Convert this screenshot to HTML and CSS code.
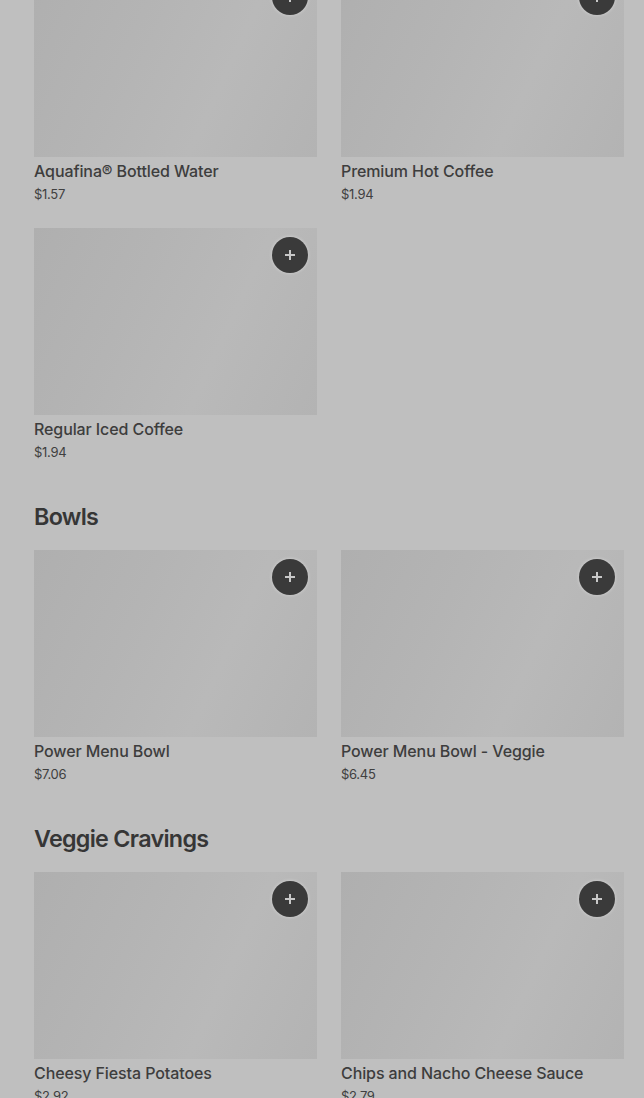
FILE: index.html
```html
<!DOCTYPE html>
<html>
<head>
<meta charset="utf-8">
<link rel="stylesheet" href="styles.css">
</head>
<body>
<main class="menu">
  <section class="section first">
    <div class="grid">
      <div class="card">
        <div class="thumb"><button class="add"><svg viewBox="0 0 12 12" width="12" height="12"><path d="M6 1v10M1 6h10" stroke="currentColor" stroke-width="2"/></svg></button></div>
        <div class="name">Aquafina® Bottled Water</div>
        <div class="price">$1.57</div>
      </div>
      <div class="card">
        <div class="thumb"><button class="add"><svg viewBox="0 0 12 12" width="12" height="12"><path d="M6 1v10M1 6h10" stroke="currentColor" stroke-width="2"/></svg></button></div>
        <div class="name">Premium Hot Coffee</div>
        <div class="price">$1.94</div>
      </div>
      <div class="card">
        <div class="thumb"><button class="add"><svg viewBox="0 0 12 12" width="12" height="12"><path d="M6 1v10M1 6h10" stroke="currentColor" stroke-width="2"/></svg></button></div>
        <div class="name">Regular Iced Coffee</div>
        <div class="price">$1.94</div>
      </div>
    </div>
  </section>
  <section class="section">
    <h2 class="heading">Bowls</h2>
    <div class="grid">
      <div class="card">
        <div class="thumb"><button class="add"><svg viewBox="0 0 12 12" width="12" height="12"><path d="M6 1v10M1 6h10" stroke="currentColor" stroke-width="2"/></svg></button></div>
        <div class="name">Power Menu Bowl</div>
        <div class="price">$7.06</div>
      </div>
      <div class="card">
        <div class="thumb"><button class="add"><svg viewBox="0 0 12 12" width="12" height="12"><path d="M6 1v10M1 6h10" stroke="currentColor" stroke-width="2"/></svg></button></div>
        <div class="name">Power Menu Bowl - Veggie</div>
        <div class="price">$6.45</div>
      </div>
    </div>
  </section>
  <section class="section">
    <h2 class="heading">Veggie Cravings</h2>
    <div class="grid">
      <div class="card">
        <div class="thumb"><button class="add"><svg viewBox="0 0 12 12" width="12" height="12"><path d="M6 1v10M1 6h10" stroke="currentColor" stroke-width="2"/></svg></button></div>
        <div class="name">Cheesy Fiesta Potatoes</div>
        <div class="price">$2.92</div>
      </div>
      <div class="card">
        <div class="thumb"><button class="add"><svg viewBox="0 0 12 12" width="12" height="12"><path d="M6 1v10M1 6h10" stroke="currentColor" stroke-width="2"/></svg></button></div>
        <div class="name">Chips and Nacho Cheese Sauce</div>
        <div class="price">$2.79</div>
      </div>
    </div>
  </section>
</main>
</body>
</html>
```
FILE: styles.css
```css
html, body {
  margin: 0;
  padding: 0;
  background: #bfbfbf;
  overflow: hidden;
}
body {
  font-family: Inter, "Noto Sans", sans-serif;
  color: #3b3b3b;
}
.menu {
  padding: 0 20px 0 34px;
}
.section {
  margin-top: 39px;
}
.section.first {
  margin-top: -30px;
}
.heading {
  margin: 0 0 17px;
  font-size: 23.3px;
  line-height: 32px;
  font-weight: 600;
  letter-spacing: -0.7px;
  color: #363636;
}
.grid {
  display: grid;
  grid-template-columns: 283px 283px;
  column-gap: 24px;
  row-gap: 24px;
}
.thumb {
  position: relative;
  height: 187px;
  background: linear-gradient(115deg, #afafaf 0%, #b4b4b4 35%, #b9b9b9 65%, #b3b3b3 100%);
}
.add {
  position: absolute;
  top: 9px;
  right: 9px;
  width: 36px;
  height: 36px;
  border: none;
  border-radius: 50%;
  padding: 0;
  background: #3a3a3a;
  color: #c8c8c8;
  display: flex;
  align-items: center;
  justify-content: center;
  box-shadow: 0 0 3px 1px rgba(255,255,255,0.25);
}
.name {
  margin-top: 4px;
  font-size: 16px;
  line-height: 20px;
  font-weight: 500;
  letter-spacing: -0.1px;
  color: #3d3d3d;
}
.price {
  margin-top: 3px;
  font-size: 13px;
  line-height: 20px;
  color: #404040;
  letter-spacing: -0.3px;
}
```
